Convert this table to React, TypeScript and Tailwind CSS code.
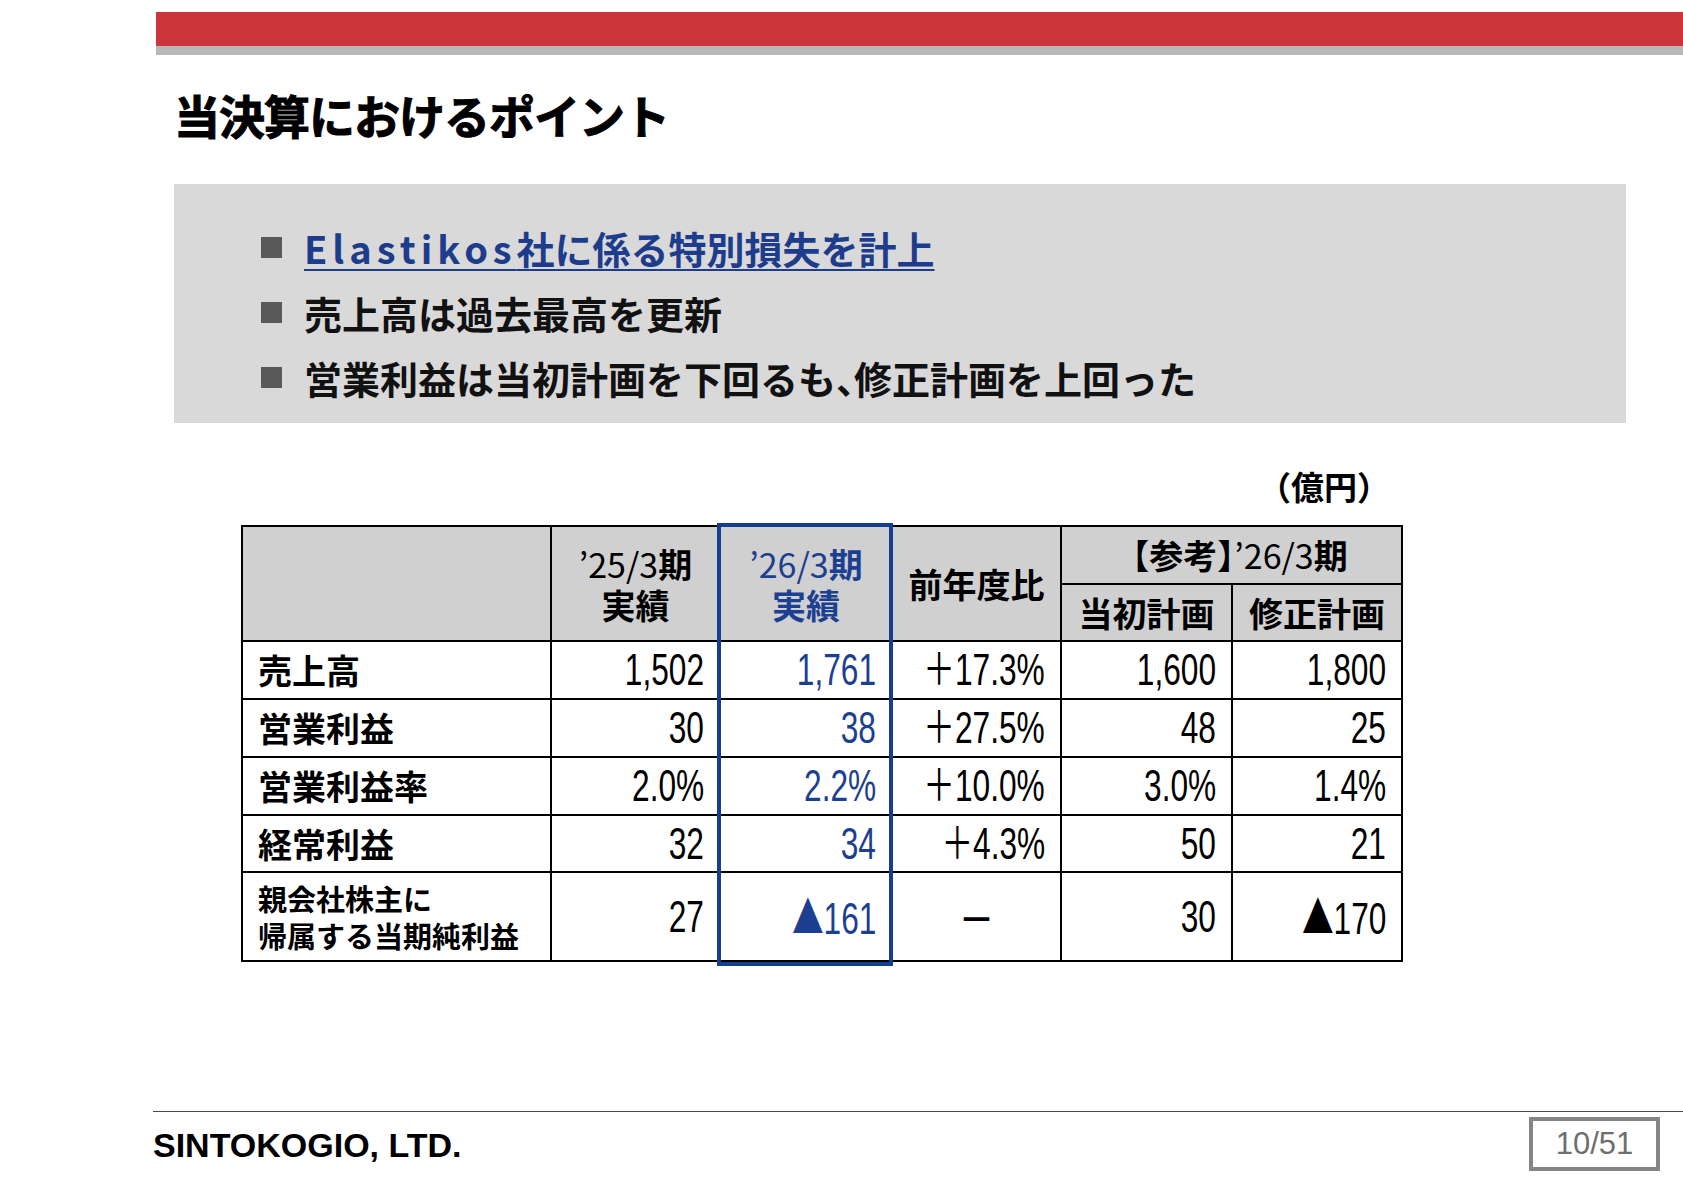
const jp = "font-['Noto_Sans_CJK_JP',sans-serif]";
const lat = "font-['Liberation_Sans','Noto_Sans_CJK_JP',sans-serif]";

const rows = [
  { label: "売上高", a: "1,502", b: "1,761", c: "＋17.3%", d: "1,600", e: "1,800" },
  { label: "営業利益", a: "30", b: "38", c: "＋27.5%", d: "48", e: "25" },
  { label: "営業利益率", a: "2.0%", b: "2.2%", c: "＋10.0%", d: "3.0%", e: "1.4%" },
  { label: "経常利益", a: "32", b: "34", c: "＋4.3%", d: "50", e: "21" },
];

const cell = "border-2 border-black p-0";
const numCell = `${cell} pr-[15px] text-[44px] leading-none whitespace-nowrap ${lat}`;
const head = `${cell} bg-[#d0d0d0] text-center text-[34px] font-bold ${jp}`;

// condensed figures, like the narrow face used in the slide
function Num({ v }: { v: string }) {
  const neg = v.startsWith("▲");
  return (
    <div className="flex justify-end">
      <span className="inline-block whitespace-nowrap origin-right scale-x-[0.72]">
        {neg && <span className={jp}>▲</span>}
        {neg ? v.slice(1) : v}
      </span>
    </div>
  );
}

export default function App() {
  return (
    <div className={`w-[1683px] h-[1190px] bg-white text-black flex flex-col overflow-hidden ${jp}`}>
      {/* top bars */}
      <div className="ml-[156px] mt-[12px]">
        <div className="h-[34px] bg-[#cd353c]" />
        <div className="h-[9px] bg-[#b8b8b8]" />
      </div>

      <h1 className="ml-[174px] mt-[36px] text-[46px] leading-none font-bold tracking-[-1px] [-webkit-text-stroke:1px_black]">
        当決算におけるポイント
      </h1>

      {/* points box */}
      <div className="ml-[174px] mt-[47px] w-[1452px] h-[239px] bg-[#d9d9d9] pl-[87px] pt-[31px]">
        <div className="h-[65px] flex items-center gap-[22px]">
          <span className="w-[21px] h-[21px] bg-[#595959] shrink-0" />
          <span className="text-[38px] font-bold text-[#1d3c8c] underline decoration-2 underline-offset-[5px]">
            <span className="tracking-[5px]">Elastikos</span>社に係る特別損失を計上
          </span>
        </div>
        <div className="h-[65px] flex items-center gap-[22px]">
          <span className="w-[21px] h-[21px] bg-[#595959] shrink-0" />
          <span className="text-[38px] font-bold text-[#111]">売上高は過去最高を更新</span>
        </div>
        <div className="h-[65px] flex items-center gap-[22px]">
          <span className="w-[21px] h-[21px] bg-[#595959] shrink-0" />
          <span className="text-[38px] font-bold text-[#111]">
            営業利益は当初計画を下回るも<span className="tracking-[-20px]">、</span>修正計画を上回った
          </span>
        </div>
      </div>

      <div className="ml-[241px] mt-[47px] w-[1160px] pr-[11px] text-right text-[33px] leading-[32px] font-bold">
        （億円）
      </div>

      {/* table */}
      <div className="relative ml-[241px] mt-[23px] w-[1160px]">
        <table className="w-[1160px] table-fixed border-collapse">
          <colgroup>
            <col className="w-[309px]" />
            <col className="w-[169px]" />
            <col className="w-[172px]" />
            <col className="w-[169px]" />
            <col className="w-[171px]" />
            <col className="w-[170px]" />
          </colgroup>
          <tbody>
            <tr className="h-[58px]">
              <td rowSpan={2} className={head} />
              <td rowSpan={2} className={`${head} leading-[41px]`}>
                <span className="font-normal">’25/3</span>期<br />実績
              </td>
              <td rowSpan={2} className={`${head} leading-[41px] text-[#1d3f91]`}>
                <span className="font-normal">’26/3</span>期<br />実績
              </td>
              <td rowSpan={2} className={head}>前年度比</td>
              <td colSpan={2} className={`${head} leading-none`}>
                【参考】<span className="font-normal">’26/3</span>期
              </td>
            </tr>
            <tr className="h-[57px]">
              <td className={`${head} leading-none`}>当初計画</td>
              <td className={`${head} leading-none`}>修正計画</td>
            </tr>
            {rows.map((r, i) => (
              <tr key={r.label} className={i === 3 ? "h-[57px]" : "h-[58px]"}>
                <td className={`${cell} pl-[15px] text-[34px] leading-none font-bold`}>{r.label}</td>
                <td className={numCell}><Num v={r.a} /></td>
                <td className={`${numCell} text-[#1d3f91]`}><Num v={r.b} /></td>
                <td className={numCell}><Num v={r.c} /></td>
                <td className={numCell}><Num v={r.d} /></td>
                <td className={numCell}><Num v={r.e} /></td>
              </tr>
            ))}
            <tr className="h-[89px]">
              <td className={`${cell} pl-[15px] text-[29px] leading-[37px] font-bold`}>
                親会社株主に
                <br />
                帰属する当期純利益
              </td>
              <td className={numCell}><Num v="27" /></td>
              <td className={`${numCell} text-[#1d3f91]`}><Num v="▲161" /></td>
              <td className={`${cell} text-center text-[36px] font-bold leading-none`}>－</td>
              <td className={numCell}><Num v="30" /></td>
              <td className={numCell}><Num v="▲170" /></td>
            </tr>
          </tbody>
        </table>
        {/* highlighted current-year column */}
        <div className="absolute left-[476px] top-[-2px] bottom-[-4px] w-[176px] border-4 border-[#143f8f] pointer-events-none" />
      </div>

      {/* footer */}
      <footer className="mt-auto ml-[153px] h-[79px] border-t border-[#4a4a4a] flex justify-between items-start">
        <div className="mt-[16px] text-[34px] leading-[34px] font-bold font-['Liberation_Sans',Arial,sans-serif]">
          SINTOKOGIO, LTD.
        </div>
        <div className={`mt-[5px] mr-[23px] w-[131px] h-[54px] border-4 border-[#858585] flex items-center justify-center text-[31px] text-[#6e6e6e] ${lat}`}>
          10/51
        </div>
      </footer>
    </div>
  );
}
